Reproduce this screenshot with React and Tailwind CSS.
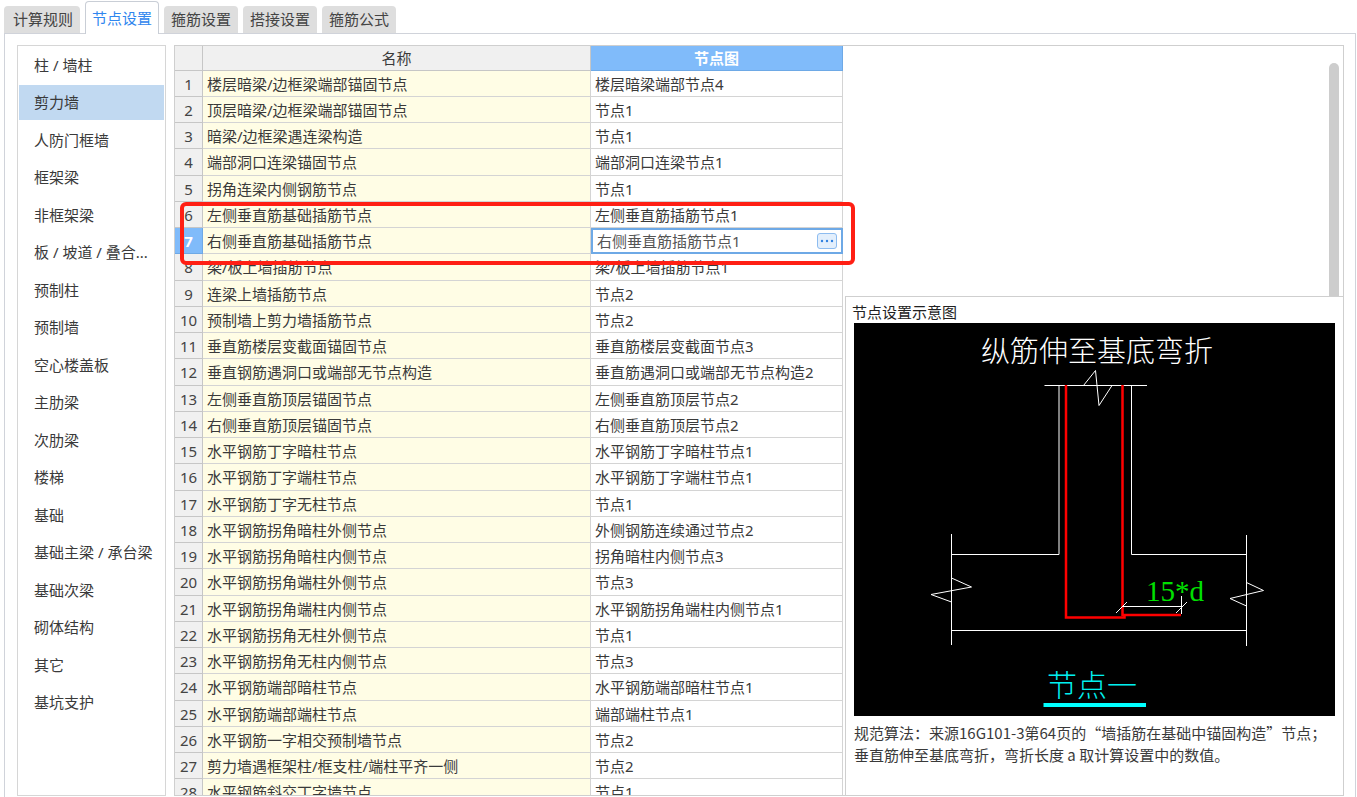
import React, { useState } from 'react';
import clsx from 'clsx';

const tabs = ['计算规则', '节点设置', '箍筋设置', '搭接设置', '箍筋公式'];

const categories = [
  '柱 / 墙柱', '剪力墙', '人防门框墙', '框架梁', '非框架梁', '板 / 坡道 / 叠合...',
  '预制柱', '预制墙', '空心楼盖板', '主肋梁', '次肋梁', '楼梯', '基础',
  '基础主梁 / 承台梁', '基础次梁', '砌体结构', '其它', '基坑支护',
];

const rows = [
  ['楼层暗梁/边框梁端部锚固节点', '楼层暗梁端部节点4'],
  ['顶层暗梁/边框梁端部锚固节点', '节点1'],
  ['暗梁/边框梁遇连梁构造', '节点1'],
  ['端部洞口连梁锚固节点', '端部洞口连梁节点1'],
  ['拐角连梁内侧钢筋节点', '节点1'],
  ['左侧垂直筋基础插筋节点', '左侧垂直筋插筋节点1'],
  ['右侧垂直筋基础插筋节点', '右侧垂直筋插筋节点1'],
  ['梁/板上墙插筋节点', '梁/板上墙插筋节点1'],
  ['连梁上墙插筋节点', '节点2'],
  ['预制墙上剪力墙插筋节点', '节点2'],
  ['垂直筋楼层变截面锚固节点', '垂直筋楼层变截面节点3'],
  ['垂直钢筋遇洞口或端部无节点构造', '垂直筋遇洞口或端部无节点构造2'],
  ['左侧垂直筋顶层锚固节点', '左侧垂直筋顶层节点2'],
  ['右侧垂直筋顶层锚固节点', '右侧垂直筋顶层节点2'],
  ['水平钢筋丁字暗柱节点', '水平钢筋丁字暗柱节点1'],
  ['水平钢筋丁字端柱节点', '水平钢筋丁字端柱节点1'],
  ['水平钢筋丁字无柱节点', '节点1'],
  ['水平钢筋拐角暗柱外侧节点', '外侧钢筋连续通过节点2'],
  ['水平钢筋拐角暗柱内侧节点', '拐角暗柱内侧节点3'],
  ['水平钢筋拐角端柱外侧节点', '节点3'],
  ['水平钢筋拐角端柱内侧节点', '水平钢筋拐角端柱内侧节点1'],
  ['水平钢筋拐角无柱外侧节点', '节点1'],
  ['水平钢筋拐角无柱内侧节点', '节点3'],
  ['水平钢筋端部暗柱节点', '水平钢筋端部暗柱节点1'],
  ['水平钢筋端部端柱节点', '端部端柱节点1'],
  ['水平钢筋一字相交预制墙节点', '节点2'],
  ['剪力墙遇框架柱/框支柱/端柱平齐一侧', '节点2'],
  ['水平钢筋斜交丁字墙节点', '节点1'],
];

const EDITING_ROW = 6;

const TabBar = () => {
  const [active, setActive] = useState(1);
  return (
    <div role="tablist" className="flex items-end gap-[5px] pl-1 h-[33px] shrink-0">
      {tabs.map((tab, i) => (
        <button
          key={tab}
          role="tab"
          aria-selected={i === active}
          onClick={() => setActive(i)}
          className={clsx(
            'rounded-t whitespace-nowrap',
            i === active
              ? 'relative z-10 -mb-px h-[33px] border border-b-0 border-[#c9ced6] bg-white px-[6px] text-[#2f86ee]'
              : 'h-[27px] bg-[#dedede] px-[7px] first:pl-[9px] text-[#444]'
          )}
        >
          {tab}
        </button>
      ))}
    </div>
  );
};

const Sidebar = () => {
  const [selected, setSelected] = useState(1);
  return (
    <nav className="w-[149px] shrink-0 border border-[#d6d6d6] px-px pt-[2px] overflow-hidden">
      {categories.map((name, i) => (
        <button
          key={name}
          onClick={() => setSelected(i)}
          className={clsx(
            'block w-full h-[35px] odd:mb-[2px] even:mb-[3px] pl-[15px] text-left whitespace-nowrap',
            i === selected && 'bg-[#c1d9f1]'
          )}
        >
          {name}
        </button>
      ))}
    </nav>
  );
};

// In-place editor for the node column
const NodeEditor = ({ value }) => {
  const [text, setText] = useState(value);
  return (
    <div className="flex items-center h-[26px] border-2 border-[#6ea9e6] bg-white px-1">
      <input
        aria-label="节点图"
        value={text}
        onChange={(e) => setText(e.target.value)}
        className="flex-1 min-w-0 h-[22px] text-[#555] outline-none"
      />
      <button aria-label="选择节点" className="flex items-center justify-center w-5 h-4 rounded-[3px] border border-[#8dbcf0] bg-[#e3effc]">
        <svg width="14" height="4" viewBox="0 0 14 4" fill="#2f80e0">
          <circle cx="2" cy="2" r="1.2" />
          <circle cx="7" cy="2" r="1.2" />
          <circle cx="12" cy="2" r="1.2" />
        </svg>
      </button>
    </div>
  );
};

const NodeTable = () => (
  <div className="relative flex-1 min-w-0">
    <table className="w-full table-fixed border-separate border-spacing-0">
      <colgroup>
        <col className="w-7" />
        <col />
        <col className="w-[252px]" />
      </colgroup>
      <thead>
        <tr className="h-[25px]">
          <th className="p-0 border-r border-b border-[#c6c6c6] bg-[#f0f0f0]" />
          <th className="p-0 border-r border-b border-[#c6c6c6] bg-[#f0f0f0] font-normal leading-6">名称</th>
          <th className="p-0 border-r border-b border-[#6ea9e6] bg-[#80bbfa] font-bold text-white leading-6">节点图</th>
        </tr>
      </thead>
      <tbody>
        {rows.map(([name, node], i) => {
          const editing = i === EDITING_ROW;
          return (
            <tr key={name} className="h-[26px] [&:nth-child(4n)]:h-[27px]">
              <td
                className={clsx(
                  'p-0 border-r border-b text-center leading-6',
                  editing ? 'border-[#6ea9e6] bg-[#80bbfa] font-bold text-white' : 'border-[#c6c6c6] bg-[#f0f0f0] text-[#444]'
                )}
              >
                {i + 1}
              </td>
              <td className="p-0 pl-1 border-r border-b border-[#d4d4d4] bg-[#fffde5] leading-6 whitespace-nowrap">{name}</td>
              {editing ? (
                <td className="p-0"><NodeEditor value={node} /></td>
              ) : (
                <td className="p-0 pl-1 border-r border-b border-[#d4d4d4] leading-6 whitespace-nowrap">{node}</td>
              )}
            </tr>
          );
        })}
      </tbody>
    </table>
    {/* callout round the foundation dowel rows */}
    <div className="absolute z-10 left-[5px] -right-3 top-[156px] h-[63px] rounded-md border-4 border-[#ff1f14] pointer-events-none" />
  </div>
);

const NodeDiagram = () => (
  <svg viewBox="0 0 481 393" className="block w-full bg-black" fill="none" stroke="#fff" strokeWidth="1">
    <text x="127" y="39" fontSize="29" fontWeight="300" fill="#fff" stroke="none" className="font-['Noto_Sans_CJK_SC',sans-serif]">纵筋伸至基底弯折</text>

    {/* wall and break symbol */}
    <path d="M190.5 62.5H293" />
    <path d="M229.5 62.5L241.5 47.5L245 82.5L258 62.5" />
    <path d="M205 62V231.5H97.5M277.5 62V231.5H392.5" />

    {/* foundation */}
    <path d="M97.5 211V322M392.5 212V323M97.5 307.5H392.5" />
    <path d="M97.5 255L117.5 264L77 271.5L97.5 279" />
    <path d="M392.5 259.5L409.5 267.5L376 275.5L392.5 283" />

    {/* rebar */}
    <path d="M212 62V294.5H270.5V292" stroke="#f00" strokeWidth="2.5" />
    <path d="M268.5 62V292H327" stroke="#f00" strokeWidth="2.5" />

    {/* bend length */}
    <text x="292" y="278" fontSize="29" fill="#00e000" stroke="none" className="font-['Liberation_Serif',serif]">15*d</text>
    <path d="M268 283.5H328M327.5 273V291M262 290L273 279M322 290L333 279" />

    <text x="193" y="373" fontSize="30" fontWeight="300" fill="#00f0f0" stroke="none" className="font-['Noto_Sans_CJK_SC',sans-serif]">节点一</text>
    <path d="M189.5 382H292" stroke="#0ff" strokeWidth="4" />
  </svg>
);

const Preview = () => (
  <section className="flex-1 ml-[2px] border-l border-t border-[#cfcfcf] bg-white pt-[5px] overflow-hidden">
    <h2 className="pl-[6px] leading-[21px] text-[#222]">节点设置示意图</h2>
    <div className="px-2">
      <NodeDiagram />
      <p className="pt-[6px] leading-[22px] font-['Noto_Sans_CJK_SC',sans-serif]">
        规范算法：来源16G101-3第64页的“墙插筋在基础中锚固构造”节点；
        <br />
        垂直筋伸至基底弯折，弯折长度 a 取计算设置中的数值。
      </p>
    </div>
  </section>
);

export default function App() {
  return (
    <div lang="zh-CN" className="flex flex-col h-screen overflow-hidden bg-white text-[15px] text-[#3a3a3a] font-['Noto_Sans','Noto_Sans_CJK_SC',sans-serif]">
      <TabBar />
      <main className="flex flex-1 min-h-0 gap-2 ml-1 mr-px border border-b-0 border-[#d0d3da] pl-3 pr-[11px] pt-[11px] pb-px">
        <Sidebar />
        <div className="flex flex-1 min-w-0 border border-[#cfcfcf] overflow-hidden">
          <NodeTable />
          <div className="flex flex-col w-[500px] shrink-0">
            <div className="flex justify-end h-[250px] shrink-0 pt-[17px] pr-1">
              <div className="w-[10px] rounded-t-full bg-[#cdcdcd]" />
            </div>
            <Preview />
          </div>
        </div>
      </main>
    </div>
  );
}
